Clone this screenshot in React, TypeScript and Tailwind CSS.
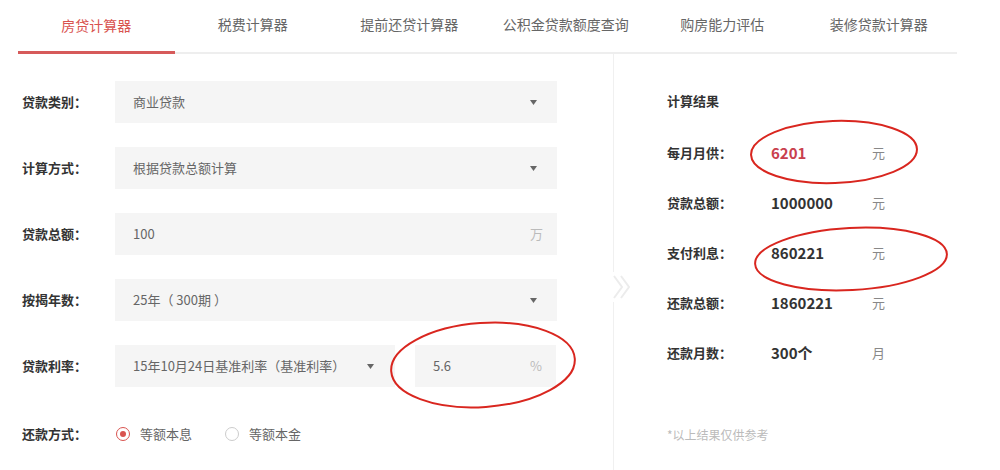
const tabs = ["房贷计算器", "税费计算器", "提前还贷计算器", "公积金贷款额度查询", "购房能力评估", "装修贷款计算器"];

const results = [
  { label: "每月月供：", value: "6201", unit: "元", red: true },
  { label: "贷款总额：", value: "1000000", unit: "元" },
  { label: "支付利息：", value: "860221", unit: "元" },
  { label: "还款总额：", value: "1860221", unit: "元" },
  { label: "还款月数：", value: "300个", unit: "月" },
];

function Arrow() {
  return (
    <svg width="7" height="5" viewBox="0 0 7 5" className="shrink-0">
      <path d="M0 0 L7 0 L3.5 5 Z" fill="#666" />
    </svg>
  );
}

function SelectBox({ text, className = "" }: { text: string; className?: string }) {
  return (
    <div className={`h-[42px] bg-[#f5f5f5] flex items-center justify-between pl-[18px] pr-[20px] text-[13px] text-[#666] whitespace-nowrap ${className}`}>
      <span>{text}</span>
      <Arrow />
    </div>
  );
}

function FormRow({ label, children }: { label: string; children: React.ReactNode }) {
  return (
    <div className="flex items-center">
      <div className="w-[93px] text-[13px] font-bold text-[#333]">{label}</div>
      {children}
    </div>
  );
}

function Radio({ checked, label }: { checked?: boolean; label: string }) {
  return (
    <div className="flex items-center gap-[10px]">
      <span className={`w-[14px] h-[14px] rounded-full border flex items-center justify-center ${checked ? "border-[#d9534f]" : "border-[#ccc]"}`}>
        {checked && <span className="w-[6px] h-[6px] rounded-full bg-[#d9534f]" />}
      </span>
      <span className="text-[13px] text-[#666]">{label}</span>
    </div>
  );
}

export default function App() {
  return (
    <div
      className="relative w-[1000px] h-[470px] bg-white overflow-hidden pl-[18px]"
      style={{ fontFamily: '"Noto Sans CJK SC", "Noto Sans", sans-serif' }}
    >
      {/* tabs */}
      <div className="flex w-[939px] h-[54px] border-b-2 border-[#eeeeee]">
        {tabs.map((t, i) => (
          <div
            key={t}
            className={`flex-1 flex items-center justify-center text-[14px] pb-[4px] ${
              i === 0 ? "text-[#d9534f] border-b-[3px] border-[#d65a5a] -mb-[2px] pt-[3px]" : "text-[#666]"
            }`}
          >
            {t}
          </div>
        ))}
      </div>

      <div className="flex h-[416px]">
        {/* form */}
        <div className="w-[596px] border-r border-[#f0f0f0] pl-[4px] pt-[27px] relative">
          <div className="flex flex-col gap-[24px]">
            <FormRow label="贷款类别：">
              <SelectBox text="商业贷款" className="w-[442px]" />
            </FormRow>
            <FormRow label="计算方式：">
              <SelectBox text="根据贷款总额计算" className="w-[442px]" />
            </FormRow>
            <FormRow label="贷款总额：">
              <div className="w-[442px] h-[42px] bg-[#f5f5f5] flex items-center justify-between pl-[18px] pr-[14px] text-[13px]">
                <span className="text-[#666]">100</span>
                <span className="text-[#bbb]">万</span>
              </div>
            </FormRow>
            <FormRow label="按揭年数：">
              <SelectBox text="25年（ 300期 ）" className="w-[442px]" />
            </FormRow>
            <FormRow label="贷款利率：">
              <div className="flex gap-[20px]">
                <div className="w-[280px] h-[42px] bg-[#f5f5f5] flex items-center pl-[18px] gap-[22px] text-[13px] text-[#666] whitespace-nowrap">
                  <span>15年10月24日基准利率（基准利率）</span>
                  <Arrow />
                </div>
                <div className="w-[141px] h-[42px] bg-[#f5f5f5] flex items-center justify-between pl-[18px] pr-[14px] text-[13px]">
                  <span className="text-[#666]">5.6</span>
                  <span className="text-[#bbb]">%</span>
                </div>
              </div>
            </FormRow>
          </div>
          <div className="flex items-center mt-[37px] h-[20px]">
            <div className="w-[93px] text-[13px] font-bold text-[#333]">还款方式：</div>
            <div className="flex items-center gap-[33px] pl-[1px]">
              <Radio checked label="等额本息" />
              <Radio label="等额本金" />
            </div>
          </div>
          {/* chevron on divider */}
          <div className="absolute right-[-20px] top-[218px] w-[22px] h-[30px] bg-white flex items-center justify-center">
            <svg width="20" height="26" viewBox="0 0 20 26">
              <path d="M2 2 L10 13 L2 24" fill="none" stroke="#ececec" strokeWidth="2" />
              <path d="M9 2 L17 13 L9 24" fill="none" stroke="#ececec" strokeWidth="2" />
            </svg>
          </div>
        </div>

        {/* results */}
        <div className="pl-[53px] pt-[37px]">
          <div className="text-[13px] font-bold text-[#333] leading-[20px]">计算结果</div>
          <div className="mt-[17px]">
            {results.map((r) => (
              <div key={r.label} className="h-[50px] flex items-center">
                <span className="w-[104px] text-[13px] font-bold text-[#333]">{r.label}</span>
                <span className={`w-[101px] text-[15px] font-bold ${r.red ? "text-[#c9404d]" : "text-[#333]"}`}>{r.value}</span>
                <span className="text-[13px] text-[#888]">{r.unit}</span>
              </div>
            ))}
          </div>
          <div className="mt-[47px] text-[12px] text-[#bbb] leading-[20px]">*以上结果仅供参考</div>
        </div>
      </div>

      {/* hand-drawn annotations */}
      <svg className="absolute inset-0 pointer-events-none" width="1000" height="470">
        <ellipse cx="483" cy="365" rx="92" ry="42" transform="rotate(-4 483 365)" fill="none" stroke="#d9261f" strokeWidth="2" />
        <ellipse cx="834" cy="152" rx="83" ry="31" transform="rotate(-2 834 152)" fill="none" stroke="#d9261f" strokeWidth="2" />
        <ellipse cx="851" cy="259" rx="96" ry="31" transform="rotate(-3 851 259)" fill="none" stroke="#d9261f" strokeWidth="2" />
      </svg>
    </div>
  );
}
